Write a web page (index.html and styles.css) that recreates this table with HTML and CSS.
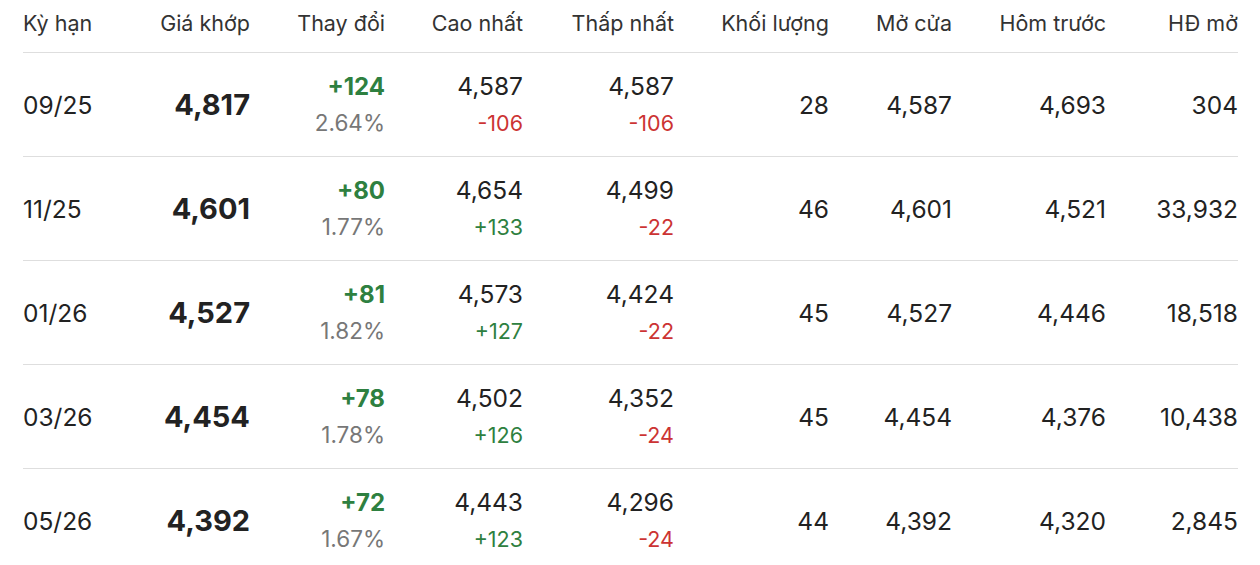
FILE: index.html
```html
<!DOCTYPE html>
<html lang="vi">
<head>
<meta charset="utf-8">
<title>Bảng giá</title>
<link rel="stylesheet" href="styles.css">
</head>
<body>
<div class="table">
  <div class="row head">
    <div class="c left">Kỳ hạn</div>
    <div class="c">Giá khớp</div>
    <div class="c">Thay đổi</div>
    <div class="c">Cao nhất</div>
    <div class="c">Thấp nhất</div>
    <div class="c">Khối lượng</div>
    <div class="c">Mở cửa</div>
    <div class="c">Hôm trước</div>
    <div class="c">HĐ mở</div>
  </div>

  <div class="row">
    <div class="c left">09/25</div>
    <div class="c big">4,817</div>
    <div class="c two"><span class="chg up">+124</span><span class="pct">2.64%</span></div>
    <div class="c two"><span>4,587</span><span class="sub down">-106</span></div>
    <div class="c two"><span>4,587</span><span class="sub down">-106</span></div>
    <div class="c">28</div>
    <div class="c">4,587</div>
    <div class="c">4,693</div>
    <div class="c">304</div>
  </div>

  <div class="row">
    <div class="c left">11/25</div>
    <div class="c big">4,601</div>
    <div class="c two"><span class="chg up">+80</span><span class="pct">1.77%</span></div>
    <div class="c two"><span>4,654</span><span class="sub up">+133</span></div>
    <div class="c two"><span>4,499</span><span class="sub down">-22</span></div>
    <div class="c">46</div>
    <div class="c">4,601</div>
    <div class="c">4,521</div>
    <div class="c">33,932</div>
  </div>

  <div class="row">
    <div class="c left">01/26</div>
    <div class="c big">4,527</div>
    <div class="c two"><span class="chg up">+81</span><span class="pct">1.82%</span></div>
    <div class="c two"><span>4,573</span><span class="sub up">+127</span></div>
    <div class="c two"><span>4,424</span><span class="sub down">-22</span></div>
    <div class="c">45</div>
    <div class="c">4,527</div>
    <div class="c">4,446</div>
    <div class="c">18,518</div>
  </div>

  <div class="row">
    <div class="c left">03/26</div>
    <div class="c big">4,454</div>
    <div class="c two"><span class="chg up">+78</span><span class="pct">1.78%</span></div>
    <div class="c two"><span>4,502</span><span class="sub up">+126</span></div>
    <div class="c two"><span>4,352</span><span class="sub down">-24</span></div>
    <div class="c">45</div>
    <div class="c">4,454</div>
    <div class="c">4,376</div>
    <div class="c">10,438</div>
  </div>

  <div class="row">
    <div class="c left">05/26</div>
    <div class="c big">4,392</div>
    <div class="c two"><span class="chg up">+72</span><span class="pct">1.67%</span></div>
    <div class="c two"><span>4,443</span><span class="sub up">+123</span></div>
    <div class="c two"><span>4,296</span><span class="sub down">-24</span></div>
    <div class="c">44</div>
    <div class="c">4,392</div>
    <div class="c">4,320</div>
    <div class="c">2,845</div>
  </div>
</div>
</body>
</html>
```

FILE: styles.css
```css
* { box-sizing: border-box; }
html, body {
  margin: 0;
  padding: 0;
  background: #fff;
}
body {
  font-family: Inter, "Liberation Sans", sans-serif;
  color: #222;
  overflow: hidden;
}
.table {
  margin-left: 23px;
  width: 1232px;
  padding-right: 17px;
}
.row {
  display: grid;
  grid-template-columns: 127px 100px 135px 138px 151px 155px 123px 154px 132px;
  height: 104px;
  border-top: 1px solid #dedede;
  font-size: 24.5px;
}
.row.head {
  height: 52px;
  border-top: none;
  font-size: 21.5px;
  color: #333;
}
.row.head .c {
  justify-content: flex-start;
  padding-top: 10px;
  line-height: 26px;
}
.c {
  display: flex;
  flex-direction: column;
  justify-content: center;
  align-items: flex-end;
  text-align: right;
  white-space: nowrap;
}
.c.left {
  align-items: flex-start;
  text-align: left;
}
.big {
  font-size: 29px;
  font-weight: 700;
}
.two span {
  display: block;
  line-height: 36px;
}
.two span:first-child {
  line-height: 37px;
}
.chg {
  font-weight: 700;
  font-size: 24px;
}
.pct {
  color: #777;
  font-size: 22.5px;
}
.sub {
  font-size: 21.5px;
}
.up { color: #2e8040; }
.down { color: #cc3333; }
```
